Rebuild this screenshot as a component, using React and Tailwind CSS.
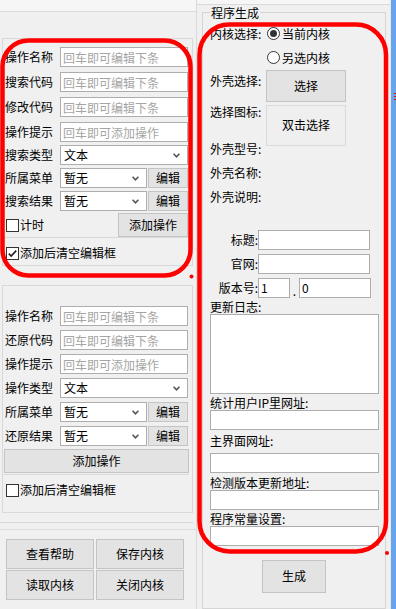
import React from "react";

const Chevron = () => (
  <svg width="7" height="5" viewBox="0 0 7 5" className="shrink-0">
    <path d="M0.6 0.8 L3.5 3.8 L6.4 0.8" fill="none" stroke="#555" strokeWidth="1.6" />
  </svg>
);

const TextBox = ({ placeholder, value, className = "" }) => (
  <input
    readOnly
    placeholder={placeholder}
    defaultValue={value}
    className={`h-[20px] border border-[#adadad] bg-white px-[2px] text-[12px] leading-[18px] text-black outline-none placeholder:text-[#a5a5a5] ${className}`}
  />
);

const Combo = ({ value, className = "" }) => (
  <div className={`flex h-[20px] items-center justify-between border border-[#adadad] bg-white pl-[3px] pr-[7px] ${className}`}>
    <span className="leading-[18px]">{value}</span>
    <Chevron />
  </div>
);

const Btn = ({ children, className = "" }) => (
  <button className={`flex shrink-0 items-center justify-center border border-[#c4c4c4] bg-[#e3e3e3] text-[12px] text-black ${className}`}>
    {children}
  </button>
);

const Check = ({ checked, label }) => (
  <div className="ml-[1px] flex items-center">
    <span className="flex h-[13px] w-[13px] items-center justify-center border border-[#333] bg-white">
      {checked && (
        <svg width="11" height="11" viewBox="0 0 11 11">
          <path d="M1.8 5.6 L4.2 8 L9.2 2.6" fill="none" stroke="#222" strokeWidth="1.7" />
        </svg>
      )}
    </span>
    <span className="ml-[1px] leading-[14px]">{label}</span>
  </div>
);

const Radio = ({ checked, label }) => (
  <div className="ml-[1px] flex items-center">
    <span className="flex h-[13px] w-[13px] items-center justify-center rounded-full border border-[#333] bg-white">
      {checked && <span className="h-[7px] w-[7px] rounded-full bg-[#333]" />}
    </span>
    <span className="ml-[2px] leading-[16px]">{label}</span>
  </div>
);

const Row = ({ label, children, className = "" }) => (
  <div className={`flex h-[20px] items-center ${className}`}>
    <span className="w-[55px] leading-[20px]">{label}</span>
    {children}
  </div>
);

const Label = ({ children, className = "" }) => <div className={`leading-[14px] ${className}`}>{children}</div>;

const Annotations = () => (
  <svg className="pointer-events-none absolute left-0 top-0" width="396" height="609" viewBox="0 0 396 609">
    <rect x="2.5" y="40.5" width="188" height="235" rx="26" fill="none" stroke="#ff0000" strokeWidth="4.5" />
    <rect x="199.5" y="24.5" width="186.5" height="527" rx="30" fill="none" stroke="#ff0000" strokeWidth="4.5" />
    <circle cx="191.5" cy="276.5" r="2" fill="#ff0000" />
    <circle cx="387" cy="553" r="2" fill="#ff0000" />
  </svg>
);

export default function App() {
  return (
    <div className="relative flex h-[609px] w-[396px] overflow-hidden bg-[#f0f0f0] font-['Noto_Sans_CJK_SC',sans-serif] text-[12px] text-black">
      {/* left column */}
      <div className="flex w-[196px] shrink-0 flex-col">
        <div className="h-[12px] border-b border-[#dadada] bg-[#f6f6f6]" />

        <div className="ml-[2px] mt-[26px] flex h-[228px] w-[191px] flex-col border border-[#d9d9d9] pl-[2px] pt-[8px]">
          <Row label="操作名称"><TextBox placeholder="回车即可编辑下条" className="w-[128px]" /></Row>
          <Row label="搜索代码" className="mt-[5px]"><TextBox placeholder="回车即可编辑下条" className="w-[128px]" /></Row>
          <Row label="修改代码" className="mt-[5px]"><TextBox placeholder="回车即可编辑下条" className="w-[128px]" /></Row>
          <Row label="操作提示" className="mt-[5px]"><TextBox placeholder="回车即可添加操作" className="w-[128px]" /></Row>
          <Row label="搜索类型" className="mt-[3px]"><Combo value="文本" className="w-[128px]" /></Row>
          <Row label="所属菜单" className="mt-[3px]">
            <Combo value="暂无" className="w-[87px]" />
            <Btn className="ml-[1px] h-[20px] w-[40px]">编辑</Btn>
          </Row>
          <Row label="搜索结果" className="mt-[3px]">
            <Combo value="暂无" className="w-[87px]" />
            <Btn className="ml-[1px] h-[20px] w-[40px]">编辑</Btn>
          </Row>
          <div className="mt-[2px] flex h-[24px] items-center justify-between pr-[4px]">
            <Check label="计时" />
            <Btn className="h-[24px] w-[70px]">添加操作</Btn>
          </div>
          <div className="-ml-[2px] h-px w-[186px] bg-[#d9d9d9]" />
          <div className="mt-[8px]"><Check checked label="添加后清空编辑框" /></div>
        </div>

        <div className="ml-[2px] mt-[19px] flex h-[228px] w-[191px] flex-col border border-[#d9d9d9] pl-[2px] pt-[20px]">
          <Row label="操作名称"><TextBox placeholder="回车即可编辑下条" className="w-[128px]" /></Row>
          <Row label="还原代码" className="mt-[4px]"><TextBox placeholder="回车即可编辑下条" className="w-[128px]" /></Row>
          <Row label="操作提示" className="mt-[4px]"><TextBox placeholder="回车即可添加操作" className="w-[128px]" /></Row>
          <Row label="操作类型" className="mt-[4px]"><Combo value="文本" className="w-[128px]" /></Row>
          <Row label="所属菜单" className="mt-[4px]">
            <Combo value="暂无" className="w-[87px]" />
            <Btn className="ml-[1px] h-[20px] w-[40px]">编辑</Btn>
          </Row>
          <Row label="还原结果" className="mt-[4px]">
            <Combo value="暂无" className="w-[87px]" />
            <Btn className="ml-[1px] h-[20px] w-[40px]">编辑</Btn>
          </Row>
          <Btn className="-ml-[1px] mt-[3px] h-[24px] w-[185px]">添加操作</Btn>
          <div className="-ml-[2px] mt-[1px] h-px w-[186px] bg-[#d9d9d9]" />
          <div className="mt-[8px]"><Check label="添加后清空编辑框" /></div>
        </div>

        <div className="mt-[9px] h-px w-[193px] bg-[#d9d9d9]" />
        <div className="mt-[6px] h-px w-[196px] bg-[#dcdcdc]" />

        <div className="ml-[6px] mt-[9px] grid grid-cols-[88px_88px] gap-x-[2px] gap-y-[1px]">
          <Btn className="h-[30px]">查看帮助</Btn>
          <Btn className="h-[30px]">保存内核</Btn>
          <Btn className="h-[30px]">读取内核</Btn>
          <Btn className="h-[30px]">关闭内核</Btn>
        </div>
      </div>

      {/* right column */}
      <div className="flex w-[194px] shrink-0 flex-col border-l border-[#d9d9d9]">
        <div className="h-[5px] border-b border-[#dadada] bg-[#f6f6f6]" />
        <div className="relative ml-[5px] mt-[7px] flex h-[620px] w-[184px] flex-col border border-[#d5d5d5] pl-[7px] pt-[13px]">
          <span className="absolute -top-[7px] left-[7px] bg-[#f0f0f0] px-[1px] leading-[14px]">程序生成</span>

          <div className="flex h-[16px] items-center">
            <span className="w-[56px] leading-[16px]">内核选择:</span>
            <Radio checked label="当前内核" />
          </div>
          <div className="mt-[8px] flex h-[16px] items-center pl-[56px]">
            <Radio label="另选内核" />
          </div>

          <div className="mt-[4px] flex items-start">
            <Label className="mt-[4px] w-[56px]">外壳选择:</Label>
            <Btn className="h-[32px] w-[80px]">选择</Btn>
          </div>
          <div className="mt-[3px] flex items-start">
            <Label className="w-[56px]">选择图标:</Label>
            <div className="flex h-[41px] w-[80px] items-center justify-center border border-[#dadada] bg-[#efefef]">双击选择</div>
          </div>

          <Label className="-mt-[4px]">外壳型号:</Label>
          <Label className="mt-[10px]">外壳名称:</Label>
          <Label className="mt-[10px]">外壳说明:</Label>

          <div className="mt-[26px] flex h-[20px] items-center">
            <span className="w-[48px] text-right">标题:</span>
            <TextBox className="w-[112px]" />
          </div>
          <div className="mt-[4px] flex h-[20px] items-center">
            <span className="w-[48px] text-right">官网:</span>
            <TextBox className="w-[112px]" />
          </div>
          <div className="mt-[4px] flex h-[20px] items-center">
            <span className="w-[48px] text-right">版本号:</span>
            <TextBox value="1" className="w-[32px]" />
            <span className="w-[9px] self-end text-center leading-[14px]">.</span>
            <TextBox value="0" className="w-[72px]" />
          </div>

          <Label className="mt-[2px]">更新日志:</Label>
          <div className="h-[80px] w-[169px] border border-[#adadad] bg-white" />

          <Label className="mt-[2px]">统计用户IP里网址:</Label>
          <TextBox className="w-[169px]" />
          <Label className="mt-[4px]">主界面网址:</Label>
          <TextBox className="mt-[5px] w-[169px]" />
          <Label className="mt-[3px]">检测版本更新地址:</Label>
          <TextBox className="w-[169px]" />
          <Label className="mt-[2px]">程序常量设置:</Label>
          <TextBox className="w-[169px]" />

          <Btn className="ml-[52px] mt-[14px] h-[33px] w-[64px]">生成</Btn>
        </div>
      </div>

      {/* neighbouring window edge */}
      <div className="flex w-[6px] shrink-0 flex-col border-l border-[#e8e8e8] bg-[#66a5ec]">
        <div className="mt-[93px] ml-[3px] h-px w-[3px] bg-[#ff0000]" />
        <div className="mt-[2px] ml-[3px] h-px w-[3px] bg-[#ff0000]" />
        <div className="mt-[2px] ml-[3px] h-px w-[3px] bg-[#ff0000]" />
      </div>

      <Annotations />
    </div>
  );
}
